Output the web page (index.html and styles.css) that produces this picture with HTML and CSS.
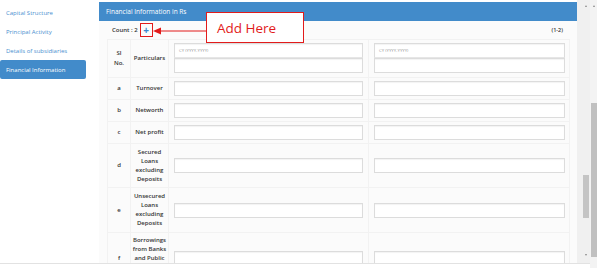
FILE: index.html
```html
<!DOCTYPE html>
<html lang="en">
<head>
    <meta charset="UTF-8">
    <meta name="viewport" content="width=device-width, initial-scale=1.0">
    <link rel="stylesheet" href="styles.css">
</head>
<body>

<div class="window">
    <div class="frame">
        <ul class="sidebar">
            <li class="nav-item">Capital Structure</li>
            <li class="nav-item">Principal Activity</li>
            <li class="nav-item">Details of subsidiaries</li>
            <li class="nav-item active">Financial Information</li>
        </ul>

        <div class="panel">
            <div class="panel-head">Financial Information in Rs</div>

            <div class="count-row">
                <div class="count">
                    <span>Count : 2</span>
                    <span class="add-btn">+</span>
                </div>
                <span class="range">(1-2)</span>
            </div>

            <!-- annotation drawn over the screenshot -->
            <svg class="callout-arrow" width="54" height="10" viewBox="0 0 54 10">
                <line x1="6" y1="5" x2="54" y2="5" stroke="#e21b1b" stroke-width="1"/>
                <polygon points="0,5 8,1.5 8,8.5" fill="#e21b1b"/>
            </svg>
            <div class="callout">Add Here</div>

            <table class="fin-table">
                <colgroup>
                    <col class="col-sl">
                    <col class="col-label">
                    <col class="col-field">
                    <col class="col-field-last">
                </colgroup>
                <tr class="head">
                    <td class="sl">Sl<br>No.</td>
                    <td class="label">Particulars</td>
                    <td class="field">
                        <div class="input input-top"><span class="ph">CY (YYYY-YYYY)</span></div>
                        <div class="input"></div>
                    </td>
                    <td class="field last">
                        <div class="input input-top"><span class="ph">CY (YYYY-YYYY)</span></div>
                        <div class="input"></div>
                    </td>
                </tr>
                <tr class="row">
                    <td class="sl">a</td>
                    <td class="label">Turnover</td>
                    <td class="field"><div class="input"></div></td>
                    <td class="field last"><div class="input"></div></td>
                </tr>
                <tr class="row">
                    <td class="sl">b</td>
                    <td class="label">Networth</td>
                    <td class="field"><div class="input"></div></td>
                    <td class="field last"><div class="input"></div></td>
                </tr>
                <tr class="row">
                    <td class="sl">c</td>
                    <td class="label">Net profit</td>
                    <td class="field"><div class="input"></div></td>
                    <td class="field last"><div class="input"></div></td>
                </tr>
                <tr class="row">
                    <td class="sl">d</td>
                    <td class="label">Secured Loans excluding Deposits</td>
                    <td class="field"><div class="input"></div></td>
                    <td class="field last"><div class="input"></div></td>
                </tr>
                <tr class="row">
                    <td class="sl">e</td>
                    <td class="label">Unsecured Loans excluding Deposits</td>
                    <td class="field"><div class="input"></div></td>
                    <td class="field last"><div class="input"></div></td>
                </tr>
                <tr class="row">
                    <td class="sl">f</td>
                    <td class="label">Borrowings from Banks and Public Financial Institutions</td>
                    <td class="field"><div class="input"></div></td>
                    <td class="field last"><div class="input"></div></td>
                </tr>
            </table>
        </div>

        <div class="scroll inner">
            <span class="arrow up"></span>
            <span class="thumb"></span>
            <span class="arrow down"></span>
        </div>
    </div>

    <div class="scroll outer">
        <span class="arrow up"></span>
        <span class="thumb"></span>
    </div>
</div>

</body>
</html>
```

FILE: styles.css
```css
body {
    margin: 0;
    width: 597px;
    height: 268px;
    overflow: hidden;
    background-color: #fff;
    font-family: "Open Sans", Arial, sans-serif;
    color: #333;
}

.window {
    display: flex;
}

.frame {
    display: flex;
    width: 590px;
    height: 263px;
    border-bottom: 1px solid #e2e2e2;
    overflow: hidden;
}

/* left menu */
.sidebar {
    width: 86px;
    flex-shrink: 0;
    margin: 0;
    padding: 3px 0 0;
    list-style: none;
}

.nav-item {
    height: 19px;
    display: flex;
    align-items: center;
    padding-left: 6px;
    font-size: 6px;
    color: #4a8fcf;
}

.nav-item.active {
    background-color: #428bca;
    color: #fff;
    border-radius: 2px;
}

/* main panel */
.panel {
    position: relative;
    width: 478px;
    flex-shrink: 0;
    margin: 2px 0 0 13px;
    background-color: #fbfbfb;
}

.panel-head {
    height: 19px;
    display: flex;
    align-items: center;
    padding-left: 7px;
    background-color: #428bca;
    color: #fff;
    font-size: 6.5px;
}

.count-row {
    height: 18px;
    display: flex;
    align-items: center;
    justify-content: space-between;
    padding: 0 14px 0 13px;
    font-size: 6px;
}

.count {
    display: flex;
    align-items: center;
    gap: 2px;
    font-weight: 600;
}

.add-btn {
    width: 11px;
    height: 12px;
    display: flex;
    align-items: center;
    justify-content: center;
    border: 1px solid #e21b1b;
    color: #3a87cf;
    font-size: 10px;
    font-weight: 700;
    line-height: 1;
}

.range {
    font-size: 5.5px;
    font-weight: 600;
}

.callout-arrow {
    position: absolute;
    left: 54px;
    top: 24px;
}

.callout {
    position: absolute;
    left: 107px;
    top: 10px;
    width: 98px;
    height: 31px;
    display: flex;
    align-items: center;
    padding-left: 10px;
    box-sizing: border-box;
    border: 1px solid #e21b1b;
    background-color: #fff;
    color: #e21b1b;
    font-size: 13.5px;
}

/* financial table */
.fin-table {
    width: 462px;
    margin-left: 8px;
    border-collapse: collapse;
    table-layout: fixed;
}

.col-sl { width: 23px; }
.col-label { width: 38px; }
.col-field { width: 200px; }
.col-field-last { width: 201px; }

.fin-table td {
    border: 1px solid #f2f2f2;
    vertical-align: middle;
    padding: 0;
}

.sl,
.label {
    text-align: center;
    font-size: 6px;
    font-weight: 600;
    line-height: 9.1px;
}

.fin-table .label {
    padding: 3.5px 0;
}

.fin-table .field {
    padding: 2.5px 5px;
}

.fin-table .head .field {
    padding-bottom: 4.5px;
}

.fin-table .field.last {
    padding-right: 4px;
}

.row {
    height: 22px;
}

.input {
    height: 15px;
    box-sizing: border-box;
    border: 1px solid #dcdcdc;
    background-color: #fff;
    box-shadow: inset 0 1px 1px rgba(0, 0, 0, 0.05);
    display: flex;
    align-items: center;
    padding-left: 4px;
}

.input-top {
    border-bottom-color: #e6e6e6;
}

.ph {
    font-size: 4.3px;
    color: #999;
}

/* fake scrollbars */
.scroll {
    display: flex;
    flex-direction: column;
    background-color: #f0f0f0;
    flex-shrink: 0;
}

.scroll.inner {
    width: 13px;
    align-items: flex-end;
    padding-right: 1px;
    box-sizing: border-box;
}

.scroll.outer {
    width: 7px;
    height: 268px;
    background-color: #f3f3f3;
    align-items: flex-end;
}

.arrow {
    width: 0;
    height: 0;
    border-left: 1.5px solid transparent;
    border-right: 1.5px solid transparent;
    margin-right: 2px;
}

.arrow.up {
    margin-top: 5px;
    border-bottom: 2px solid #888;
}

.arrow.down {
    margin-top: 36px;
    border-top: 2px solid #888;
}

.inner .thumb {
    width: 6px;
    height: 43px;
    margin-top: 168px;
    background-color: #c4c4c4;
}

.outer .thumb {
    width: 6px;
    height: 154px;
    margin-top: 96px;
    background-color: #c0c0c0;
}
```
